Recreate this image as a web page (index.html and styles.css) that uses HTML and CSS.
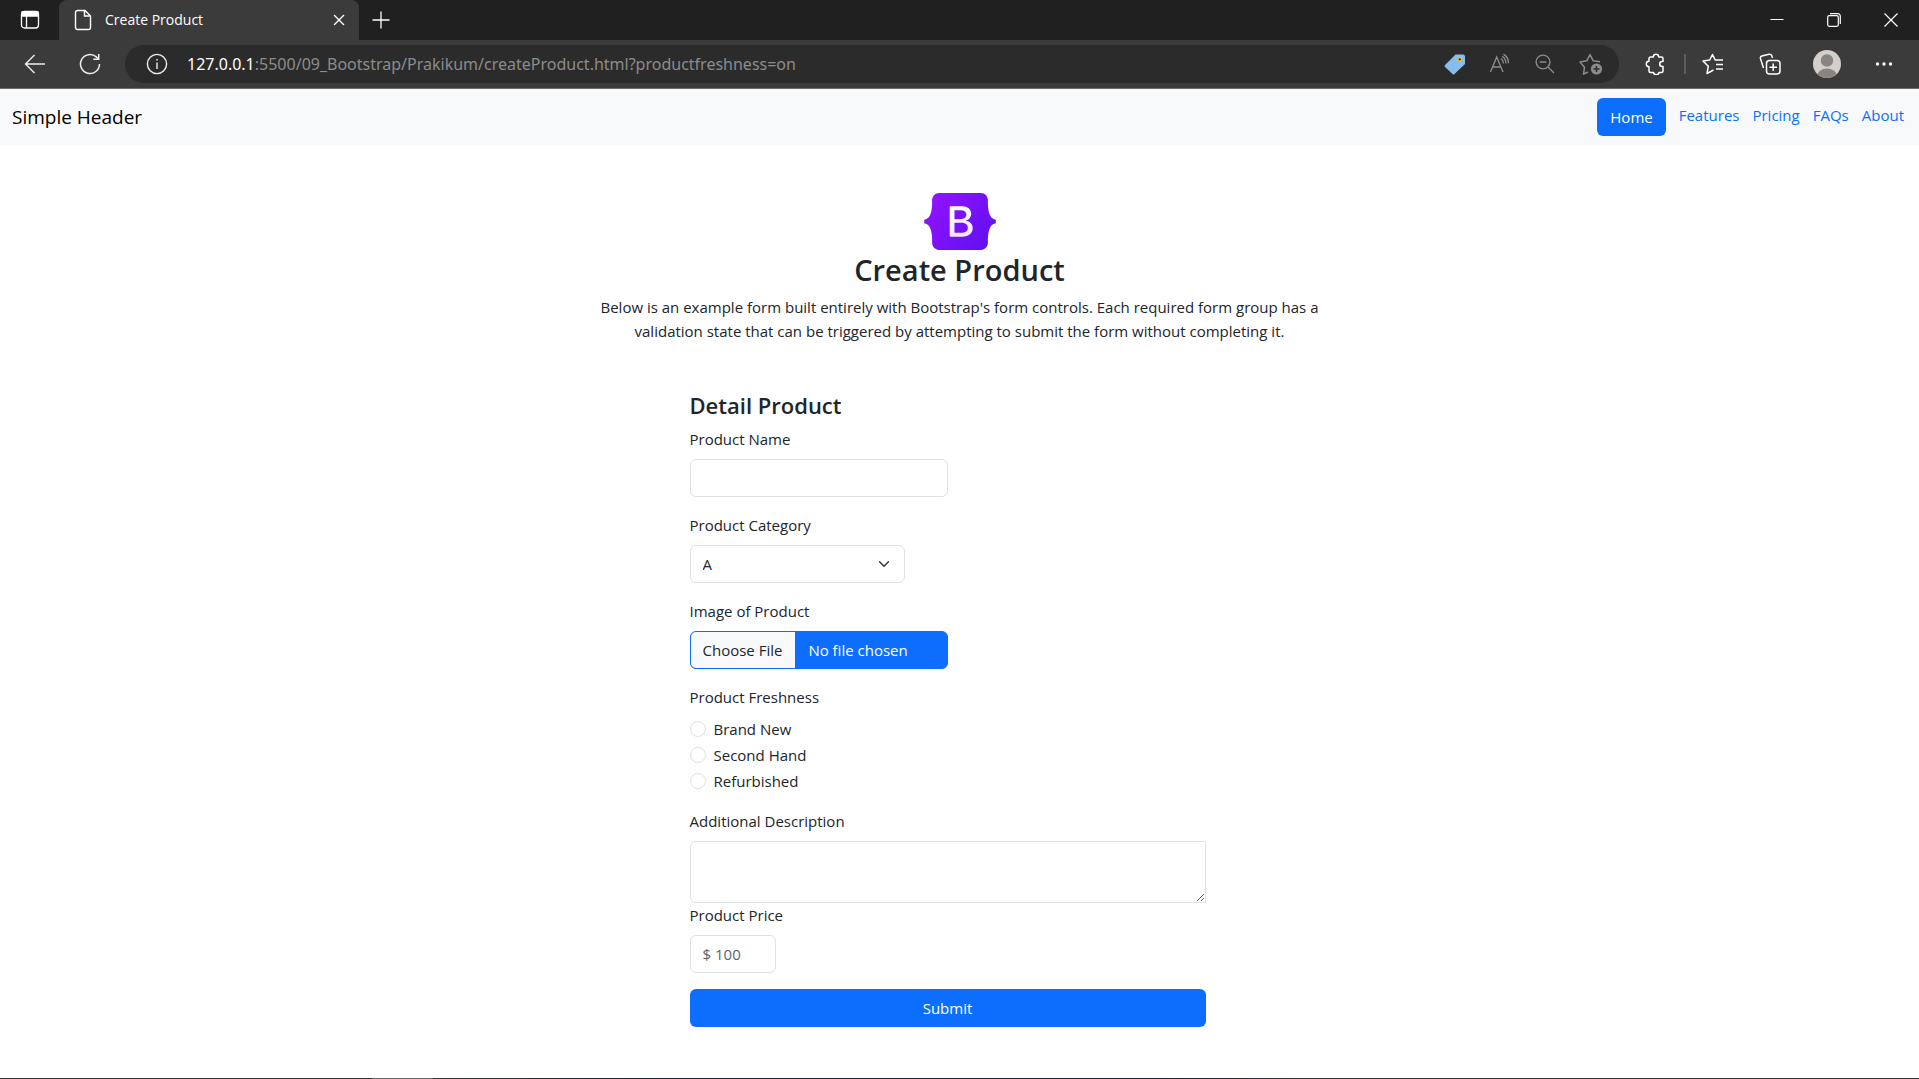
FILE: index.html
```html
<!DOCTYPE html>
<html lang="en">
<head>
  <meta charset="utf-8">
  <title>Create Product</title>
  <link rel="stylesheet" href="styles.css">
</head>
<body>
  <div class="tabstrip">
    <button class="icon-btn tab-actions" type="button" aria-label="Tab actions">
      <svg width="20" height="20" viewBox="0 0 20 20" fill="none" stroke="#fff" stroke-width="1.3"><rect x="1.5" y="1.5" width="17" height="16.5" rx="3"/><path d="M2 2h16v4H2z" fill="#fff"/><path d="M6.5 6v12"/></svg>
    </button>
    <div class="tab">
      <svg width="18" height="22" viewBox="0 0 18 22" fill="none" stroke="#fff" stroke-width="1.4"><path d="M3.5 1.5h7.500l5.500 5.500v11.500a2 2 0 0 1-2 2h-11a2 2 0 0 1-2-2v-15a2 2 0 0 1 2-2z"/><path d="M10.500 1.500v5.500h6"/></svg>
      <span class="tab-title">Create Product</span>
      <button class="icon-btn tab-close" type="button" aria-label="Close tab">
        <svg width="12" height="12" viewBox="0 0 12 12" stroke="#fff" stroke-width="1.400"><path d="M1 1l10 10M11 1L1 11"/></svg>
      </button>
    </div>
    <button class="icon-btn new-tab" type="button" aria-label="New tab">
      <svg width="18" height="18" viewBox="0 0 18 18" stroke="#fff" stroke-width="1.300"><path d="M9 0.500v17M0.500 9h17"/></svg>
    </button>
    <div class="window-controls">
      <button class="icon-btn win-btn" type="button" aria-label="Minimize"><svg width="14" height="14" viewBox="0 0 14 14"><path d="M0.500 6.500h13" stroke="#fff"/></svg></button>
      <button class="icon-btn win-btn" type="button" aria-label="Restore"><svg width="14" height="14" viewBox="0 0 14 14" fill="none" stroke="#fff" stroke-width="1.200"><rect x="0.700" y="2.700" width="10.600" height="10.600" rx="1.500"/><path d="M3 0.700h7.800a2.500 2.500 0 0 1 2.500 2.500V11"/></svg></button>
      <button class="icon-btn win-btn" type="button" aria-label="Close"><svg width="14" height="14" viewBox="0 0 14 14" stroke="#fff" stroke-width="1.200"><path d="M0.500 0.500l13 13M13.500 0.500l-13 13"/></svg></button>
    </div>
  </div>

  <div class="toolbar">
    <button class="icon-btn nav-btn" type="button" aria-label="Back">
      <svg width="22" height="20" viewBox="0 0 22 20" fill="none" stroke="#eee" stroke-width="1.400"><path d="M10.500 1L1.500 10l9 9M1.500 10H21"/></svg>
    </button>
    <button class="icon-btn nav-btn" type="button" aria-label="Refresh">
      <svg width="22" height="22" viewBox="0 0 22 22" fill="none" stroke="#eee" stroke-width="1.500"><path d="M20.500 11a9.500 9.500 0 1 1-3.200-7.100L19.500 6"/><path d="M19.700 1v5.300h-5.400"/></svg>
    </button>
    <div class="address">
      <svg width="22" height="22" viewBox="0 0 22 22" fill="none" stroke="#eee" stroke-width="1.400"><circle cx="11" cy="11" r="9.600"/><path d="M11 9.500v6.500M11 6v1.600"/></svg>
      <span class="url"><span class="url-host">127.0.0.1</span>:5500/09_Bootstrap/Prakikum/createProduct.html?productfreshness=on</span>
      <div class="address-tools">
        <svg width="22" height="22" viewBox="0 0 22 22"><path d="M11.500 1.500H19A2.300 2.300 0 0 1 21 3.500V11L10.500 21a1.400 1.400 0 0 1-2 0L1 14a1.800 1.800 0 0 1 0-2z" fill="#87bdec"/><circle cx="15.800" cy="6.300" r="1.800" fill="#222" stroke="#f2c01d" stroke-width="1.400"/></svg>
        <svg width="22" height="22" viewBox="0 0 22 22" fill="none" stroke="#8c8c8c" stroke-width="1.400"><path d="M1.500 19L7.700 4l6.300 15M3.700 14h8.200"/><path d="M12 5.500a6 6 0 0 1 2.500 5M13.300 3.300a9 9 0 0 1 3.700 7.200M14.500 1.200a11 11 0 0 1 5 9"/></svg>
        <svg width="22" height="22" viewBox="0 0 22 22" fill="none" stroke="#8c8c8c" stroke-width="1.400"><circle cx="9" cy="9" r="6.900"/><path d="M14 14l6 6M5.700 9h6.600"/></svg>
        <svg width="24" height="24" viewBox="0 0 24 24" fill="none" stroke="#8c8c8c" stroke-width="1.500" stroke-linejoin="round"><path d="M9 20l-4.500 2.200 1-7L1 10l6.800-1.200L11 2.500l3.200 6.300 6.800 1"/><circle cx="17.500" cy="17" r="5.600" fill="#8c8c8c" stroke="none"/><path d="M17.500 14v6M14.500 17h6" stroke="#2b2b2b"/></svg>
      </div>
    </div>
    <div class="browser-tools">
      <button class="icon-btn tool extensions" type="button" aria-label="Extensions"><svg width="22" height="22" viewBox="0 0 22 22" fill="none" stroke="#fff" stroke-width="1.500" stroke-linejoin="round"><path d="M5.500 4h2.800a2.700 2.700 0 0 1 5.400 0h2.800A1.500 1.500 0 0 1 18 5.500v3h-.8a2.500 2.500 0 0 0 0 5h.8V18a1.500 1.500 0 0 1-1.500 1.500H14a2.800 2.800 0 0 1-5.500 0h-3A1.500 1.500 0 0 1 4 18v-4.300a2.700 2.700 0 0 1 0-5.400V5.500A1.500 1.500 0 0 1 5.500 4z"/></svg></button>
      <button class="icon-btn tool" type="button" aria-label="Favorites"><svg width="22" height="22" viewBox="0 0 22 22" fill="none" stroke="#fff" stroke-width="1.500" stroke-linejoin="round"><path d="M11.500 17L5 20.500l1.300-7.200L1 8l6.700-1L10.500 1.500 13.200 7h7.800M14 11.500h7M14 16h7"/></svg></button>
      <button class="icon-btn tool" type="button" aria-label="Collections"><svg width="22" height="22" viewBox="0 0 22 22" fill="none" stroke="#fff" stroke-width="1.500"><rect x="7.500" y="7.500" width="13.500" height="13.500" rx="3"/><path d="M14.200 10.500v7.500M10.500 14.200h7.500M4.500 15L1.500 5.700A2 2 0 0 1 2.800 3L10 1.200a2.500 2.500 0 0 1 3 2L13.500 5"/></svg></button>
      <button class="icon-btn tool profile" type="button" aria-label="Profile"><svg width="28" height="28" viewBox="0 0 28 28"><defs><clipPath id="avatar"><circle cx="14" cy="14" r="14"/></clipPath></defs><g clip-path="url(#avatar)"><path d="M0 0h28v28H0z" fill="#d2cfcc"/><circle cx="14" cy="10.500" r="6.200" fill="#8a8582"/><ellipse cx="14" cy="26" rx="10" ry="7.500" fill="#8a8582"/></g></svg></button>
      <button class="icon-btn tool" type="button" aria-label="Settings and more"><svg width="18" height="18" viewBox="0 0 18 18" fill="#fff"><circle cx="2.500" cy="9" r="1.700"/><circle cx="9" cy="9" r="1.700"/><circle cx="15.500" cy="9" r="1.700"/></svg></button>
    </div>
  </div>

  <header class="navbar">
    <span class="brand">Simple Header</span>
    <nav class="nav">
      <a class="btn" href="#">Home</a>
      <a class="nav-link" href="#">Features</a>
      <a class="nav-link" href="#">Pricing</a>
      <a class="nav-link" href="#">FAQs</a>
      <a class="nav-link" href="#">About</a>
    </nav>
  </header>

  <main class="page">
    <section class="intro">
      <svg class="logo" width="72" height="57" viewBox="0 0 118 94" role="img" aria-label="Bootstrap">
        <defs>
          <linearGradient id="shell" x1="76" y1="10" x2="523" y2="366" gradientUnits="userSpaceOnUse" gradientTransform="scale(.2)"><stop stop-color="#9013fe"/><stop offset="1" stop-color="#6610f2"/></linearGradient>
          <linearGradient id="letter" x1="0" y1="0" x2="0" y2="1"><stop stop-color="#fff"/><stop offset="1" stop-color="#f1e5fc"/></linearGradient>
        </defs>
        <path fill="url(#shell)" fill-rule="evenodd" d="M24.509 0c-6.733 0-11.715 5.893-11.492 12.284.214 6.140-.064 14.092-2.066 20.577C8.943 39.365 5.547 43.485 0 44.014v5.972c5.547.529 8.943 4.649 10.951 11.153 2.002 6.485 2.280 14.437 2.066 20.577C12.794 88.106 17.776 94 24.510 94H93.500c6.733 0 11.714-5.893 11.491-12.284-.214-6.140.064-14.092 2.066-20.577 2.009-6.504 5.396-10.624 10.943-11.153v-5.972c-5.547-.529-8.934-4.649-10.943-11.153-2.002-6.484-2.280-14.437-2.066-20.577C105.214 5.894 100.233 0 93.500 0H24.508z"/>
        <path fill="url(#letter)" fill-rule="evenodd" d="M80 57.863C80 66.663 73.436 72 62.543 72H44a2 2 0 0 1-2-2V24a2 2 0 0 1 2-2h18.437c9.083 0 15.044 4.920 15.044 12.474 0 5.302-4.010 10.049-9.119 10.880v.277C75.317 46.394 80 51.210 80 57.863zM60.521 28.340H49.948v14.934h8.905c6.884 0 10.680-2.772 10.680-7.727 0-4.643-3.264-7.207-9.012-7.207zM49.948 49.200v16.458H60.910c7.167 0 10.964-2.876 10.964-8.281 0-5.406-3.903-8.178-11.425-8.178H49.948z"/>
      </svg>
      <h1 class="title">Create Product</h1>
      <p class="lead">Below is an example form built entirely with Bootstrap's form controls. Each required form group has a validation state that can be triggered by attempting to submit the form without completing it.</p>
    </section>

    <form class="form">
      <h2 class="subtitle">Detail Product</h2>
      <div class="field">
        <label for="name">Product Name</label>
        <input class="control half" id="name" type="text">
      </div>
      <div class="field">
        <label for="category">Product Category</label>
        <select class="control select" id="category"><option>A</option><option>B</option><option>C</option></select>
      </div>
      <div class="field">
        <label for="image">Image of Product</label>
        <input class="control file half" id="image" type="file">
      </div>
      <fieldset class="field">
        <legend>Product Freshness</legend>
        <div class="check"><input class="radio" type="radio" name="productfreshness" id="brand-new"><label for="brand-new">Brand New</label></div>
        <div class="check"><input class="radio" type="radio" name="productfreshness" id="second-hand"><label for="second-hand">Second Hand</label></div>
        <div class="check"><input class="radio" type="radio" name="productfreshness" id="refurbished"><label for="refurbished">Refurbished</label></div>
      </fieldset>
      <div class="field flush">
        <label for="description">Additional Description</label>
        <textarea class="control area" id="description" rows="2"></textarea>
      </div>
      <div class="field">
        <label for="price">Product Price</label>
        <input class="control price" id="price" type="text" placeholder="$ 100">
      </div>
      <button class="btn submit" type="submit">Submit</button>
    </form>
  </main>

  <footer class="taskbar"></footer>
</body>
</html>
```

FILE: styles.css
```css
* {
  box-sizing: border-box;
}

body {
  margin: 0;
  min-height: 100vh;
  display: flex;
  flex-direction: column;
  background: #fff;
  color: #212529;
  font-family: "Open Sans", "Noto Sans", sans-serif;
  font-size: 15px;
  line-height: 24px;
}

button,
input,
select,
textarea {
  font: inherit;
  color: inherit;
}

svg {
  display: block;
  flex: none;
}

/* Browser frame */
.icon-btn {
  display: flex;
  align-items: center;
  justify-content: center;
  padding: 0;
  border: 0;
  background: none;
}

.tabstrip {
  display: flex;
  height: 40px;
  background: #202020;
}

.tab-actions {
  width: 59px;
}

.tab {
  display: flex;
  align-items: center;
  width: 300px;
  padding: 0 14px 0 15px;
  border-radius: 8px 8px 0 0;
  background: #3b3b3b;
  color: #fff;
}

.tab-title {
  flex: 1;
  margin-left: 13px;
  font-size: 14px;
}

.new-tab {
  width: 44px;
}

.window-controls {
  display: flex;
  margin-left: auto;
}

.win-btn {
  width: 57px;
}

.toolbar {
  display: flex;
  align-items: center;
  height: 49px;
  padding: 0 7px;
  border-bottom: 1px solid #6a6a6a;
  background: #3b3b3b;
}

.nav-btn {
  width: 55px;
  height: 38px;
}

.address {
  flex: 1;
  display: flex;
  align-items: center;
  height: 38px;
  margin-left: 8px;
  padding: 0 16px 0 21px;
  border-radius: 19px;
  background: #2b2b2b;
}

.url {
  flex: 1;
  margin-left: 19px;
  color: #8c8c8c;
  font-family: "Noto Sans", sans-serif;
  font-size: 16px;
}

.url-host {
  color: #fff;
}

.address-tools {
  display: flex;
  align-items: center;
  gap: 23px;
}

.browser-tools {
  display: flex;
  align-items: center;
  margin-left: 8px;
}

.tool {
  width: 57px;
  height: 38px;
}

.extensions {
  position: relative;
}

.extensions::after {
  content: "";
  position: absolute;
  right: -2px;
  width: 2px;
  height: 20px;
  background: #5c5c5c;
}

/* Page header */
.navbar {
  display: flex;
  align-items: center;
  justify-content: space-between;
  height: 56px;
  padding: 0 15px 0 12px;
  background: #f8f9fa;
}

.brand {
  color: #000;
  font-size: 19px;
}

.nav {
  display: flex;
  gap: 13px;
}

.nav-link {
  padding-top: 5px;
  color: #0d6efd;
  text-decoration: none;
}

.btn {
  padding: 7px 13px;
  border: 0;
  border-radius: 6px;
  background: #0d6efd;
  color: #fff;
  text-align: center;
  text-decoration: none;
}

/* Content */
.page {
  flex: 1;
  padding: 48px 24px;
}

.intro {
  display: flex;
  flex-direction: column;
  align-items: center;
  text-align: center;
}

.title {
  margin: 0 0 5px;
  font-size: 29px;
  font-weight: 600;
  line-height: 40px;
}

.lead {
  max-width: 736px;
  margin: 0;
}

.form {
  max-width: 540px;
  margin: 48px auto 0;
  padding-right: 24px;
}

.subtitle {
  margin: 0 0 8px;
  font-size: 22px;
  font-weight: 600;
  line-height: 28px;
}

.field {
  display: flex;
  flex-direction: column;
  align-items: flex-start;
  gap: 8px;
  margin: 0 0 16px;
  padding: 0;
  border: 0;
}

fieldset.field {
  gap: 2px;
}

legend {
  padding: 0;
  margin-bottom: 8px;
}

.flush {
  margin-bottom: 0;
}

.control {
  display: block;
  width: 100%;
  height: 38px;
  padding: 6px 12px;
  border: 1px solid #dee2e6;
  border-radius: 6px;
  background: #fff;
}

.half {
  width: 50%;
}

.select {
  width: calc(100% * 5 / 12);
  appearance: none;
  background: #fff url("data:image/svg+xml,%3Csvg xmlns='http://www.w3.org/2000/svg' viewBox='0 0 16 16'%3E%3Cpath fill='none' stroke='%23343a40' stroke-linecap='round' stroke-linejoin='round' stroke-width='2' d='m2 5 6 6 6-6'/%3E%3C/svg%3E") no-repeat right 14px center / 12px 12px;
}

.file {
  overflow: hidden;
  border-color: #0d6efd;
  background: #0d6efd;
  color: #fff;
}

.file::file-selector-button {
  margin: -6px 13px -6px -12px;
  padding: 6px 13px 6px 12px;
  border: 0;
  background: #f8f9fa;
  color: #212529;
  font: inherit;
}

.check {
  display: flex;
  align-items: center;
  gap: 8px;
}

.radio {
  width: 16px;
  height: 16px;
  margin: 0;
  border: 1px solid #dee2e6;
  border-radius: 50%;
  appearance: none;
  background: #fff;
}

.radio:checked {
  border: 5px solid #0d6efd;
}

.area {
  height: 62px;
  border-radius: 6px 0 0 6px;
  resize: vertical;
}

.price {
  width: calc(100% / 6);
}

.price::placeholder {
  color: #5c636a;
  opacity: 1;
}

.submit {
  display: block;
  width: 100%;
}

/* Top edge of the taskbar, with the active app lighter */
.taskbar {
  height: 1px;
  background: linear-gradient(to right, #333 372px, #666 372px, #666 433px, #333 433px, #1d2430 35%, #1d2430 60%, #333 68%);
}
```
